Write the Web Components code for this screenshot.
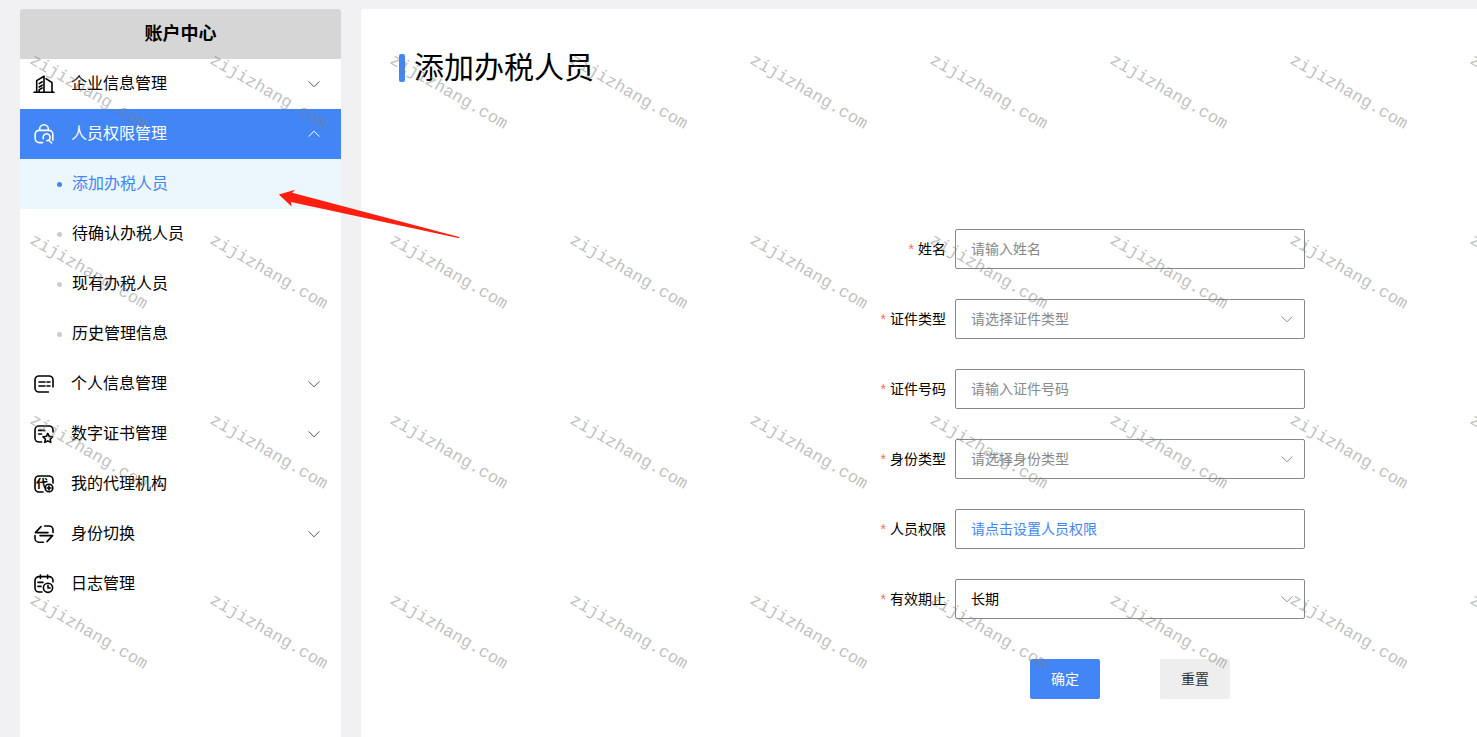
<!DOCTYPE html>
<html lang="zh-CN">
<head>
<meta charset="utf-8">
<meta name="viewport" content="width=device-width, initial-scale=1">
<title>账户中心</title>
<style>
    body {
        margin: 0;
        background: #f1f1f4;
        color: #000;
        font-family: "Liberation Sans", "Noto Sans CJK SC", sans-serif;
        font-size: 16px;
        line-height: 24px;
    }
</style>
</head>
<body>
<account-app>
    <side-menu slot="side" heading="账户中心">
        <menu-item icon="company" label="企业信息管理" arrow></menu-item>
        <menu-item icon="lock" label="人员权限管理" arrow open>
            <sub-item active>添加办税人员</sub-item>
            <sub-item>待确认办税人员</sub-item>
            <sub-item>现有办税人员</sub-item>
            <sub-item>历史管理信息</sub-item>
        </menu-item>
        <menu-item icon="profile" label="个人信息管理" arrow></menu-item>
        <menu-item icon="cert" label="数字证书管理" arrow></menu-item>
        <menu-item icon="agent" label="我的代理机构"></menu-item>
        <menu-item icon="swap" label="身份切换" arrow></menu-item>
        <menu-item icon="log" label="日志管理"></menu-item>
    </side-menu>
    <page-title>添加办税人员</page-title>
    <person-form>
        <form-field type="text" label="姓名" text="请输入姓名"></form-field>
        <form-field type="select" label="证件类型" text="请选择证件类型"></form-field>
        <form-field type="text" label="证件号码" text="请输入证件号码"></form-field>
        <form-field type="select" label="身份类型" text="请选择身份类型"></form-field>
        <form-field type="button" label="人员权限" text="请点击设置人员权限"></form-field>
        <form-field type="select" label="有效期止" text="长期" filled></form-field>
        <form-button slot="actions" primary>确定</form-button>
        <form-button slot="actions">重置</form-button>
    </person-form>
</account-app>
<water-mark text="zijizhang.com"></water-mark>
<pointer-arrow></pointer-arrow>

<script>
const icons = {
    company: `<path d="M0 18.2h20M2.7 18V6.6L10 2.2V18M12 4.6l6 4V18M5.2 9.6l3-1.8M5.2 13l3-1.8M5.2 18v-2.4l3-1.6"/>`,
    lock: `<path d="M5.6 6.4V5.2a4.4 4.4 0 0 1 8.8 0v1.2M8.6 18.6H5.2a4 4 0 0 1-4-4V10a3.6 3.6 0 0 1 3.6-3.6h10.4A3.6 3.6 0 0 1 18.8 10v6.2M9.4 14.6a3.5 3.5 0 1 1 3.4 2.2M14.6 16l3 3"/>`,
    profile: `<path d="M14.4 18H5a4 4 0 0 1-4-4V6a4 4 0 0 1 4-4h10a4 4 0 0 1 4 4v7M5 8h6M13 8h3M5 12h6M13 12h3"/>`,
    cert: `<path d="M7.6 18H5a4 4 0 0 1-4-4V6a4 4 0 0 1 4-4h10a4 4 0 0 1 4 4v2M4.6 6.4h6M4.6 10h3"/>
        <path d="M13.8 9.4l1.5 2.9 3.3.5-2.4 2.3.6 3.3-3-1.5-3 1.5.6-3.3-2.4-2.3 3.3-.5z"/>`,
    agent: `<path d="M9 18H5a4 4 0 0 1-4-4V6a4 4 0 0 1 4-4h10a4 4 0 0 1 4 4v3"/>
        <text x="2" y="14" font-size="12" font-weight="bold" fill="currentColor" stroke="none">代</text>
        <circle cx="15" cy="14" r="3.8" fill="#fff"/><path d="M13 14h4M15 12v4"/>`,
    swap: `<path d="M7 2.6L1.4 8.6H14M10.6 2H15a4 4 0 0 1 4 4v2.4M13 17.6l5.6-6H6M9.4 18.2H5a4 4 0 0 1-4-4v-2.6"/>`,
    log: `<path d="M8 18H5a4 4 0 0 1-4-4V6.6a4 4 0 0 1 4-4h10a4 4 0 0 1 4 4V8M6.4 1v3.4M13.6 1v3.4M4 8.4h5M4 12.4h3"/>
        <circle cx="14" cy="13.8" r="4.6"/><path d="M14 11.4v2.6h2"/>`
};

const chevron = `<svg class="chevron" viewBox="0 0 12 8" width="12" height="8" fill="none" stroke="currentColor"><path d="M.6 1.4L6 6.8l5.4-5.4"/></svg>`;

class AccountApp extends HTMLElement {
    constructor() {
        super();
        this.attachShadow({mode: "open"}).innerHTML = `
            <style>
                :host {
                    display: flex;
                    gap: 20px;
                    box-sizing: border-box;
                    min-height: 100vh;
                    padding: 9px 0 0 20px;
                }
                aside {
                    flex: 0 0 321px;
                    background: #fff;
                    border-radius: 3px 3px 0 0;
                    overflow: hidden;
                }
                main {
                    flex: 1;
                    min-width: 0;
                    padding: 39px 38px;
                    background: #fff;
                    border-radius: 3px 0 0 0;
                }
            </style>
            <aside><slot name="side"></slot></aside>
            <main><slot></slot></main>`;
    }
}
customElements.define("account-app", AccountApp);

class SideMenu extends HTMLElement {
    constructor() {
        super();
        this.attachShadow({mode: "open"}).innerHTML = `
            <style>
                :host { display: block; }
                h2 {
                    margin: 0;
                    background: #d6d6d6;
                    font-size: 18px;
                    line-height: 50px;
                    text-align: center;
                }
            </style>
            <h2>${this.getAttribute("heading")}</h2>
            <nav><slot></slot></nav>`;
    }
}
customElements.define("side-menu", SideMenu);

class MenuItem extends HTMLElement {
    constructor() {
        super();
        const open = this.hasAttribute("open");
        this.attachShadow({mode: "open"}).innerHTML = `
            <style>
                :host { display: block; }
                button {
                    display: flex;
                    align-items: center;
                    width: 100%;
                    height: 50px;
                    padding: 0 21px 0 14px;
                    border: 0;
                    background: none;
                    color: inherit;
                    font: inherit;
                    text-align: left;
                    cursor: pointer;
                }
                .icon {
                    margin-right: 17px;
                    overflow: visible;
                }
                .label { flex: 1; }
                .chevron { color: #555; }
                :host([open]) button {
                    background: #4285f4;
                    color: #fff;
                }
                :host([open]) .chevron {
                    color: #fff;
                    transform: rotate(180deg);
                }
            </style>
            <button type="button" aria-expanded="${open}">
                <svg class="icon" viewBox="0 0 20 20" width="20" height="20" fill="none" stroke="currentColor" stroke-width="1.6" stroke-linecap="round" stroke-linejoin="round">${icons[this.getAttribute("icon")]}</svg>
                <span class="label">${this.getAttribute("label")}</span>
                ${this.hasAttribute("arrow") ? chevron : ""}
            </button>
            <slot></slot>`;
    }
}
customElements.define("menu-item", MenuItem);

class SubItem extends HTMLElement {
    constructor() {
        super();
        this.attachShadow({mode: "open"}).innerHTML = `
            <style>
                :host { display: block; }
                a {
                    display: flex;
                    align-items: center;
                    gap: 10px;
                    height: 50px;
                    padding-left: 37px;
                    color: inherit;
                    text-decoration: none;
                }
                a::before {
                    content: "";
                    width: 5px;
                    height: 5px;
                    border-radius: 50%;
                    background: #ccc;
                }
                :host([active]) a {
                    background: #ebf6fd;
                    color: #4285f4;
                }
                :host([active]) a::before { background: #4285f4; }
            </style>
            <a href="#"><slot></slot></a>`;
    }
}
customElements.define("sub-item", SubItem);

class PageTitle extends HTMLElement {
    constructor() {
        super();
        this.attachShadow({mode: "open"}).innerHTML = `
            <style>
                :host { display: block; }
                h1 {
                    display: flex;
                    align-items: center;
                    gap: 9px;
                    margin: 0;
                    font-size: 30px;
                    font-weight: 400;
                    line-height: 40px;
                }
                h1::before {
                    content: "";
                    width: 6px;
                    height: 28px;
                    border-radius: 2px;
                    background: #4285f4;
                }
            </style>
            <h1><slot></slot></h1>`;
    }
}
customElements.define("page-title", PageTitle);

class PersonForm extends HTMLElement {
    constructor() {
        super();
        this.attachShadow({mode: "open"}).innerHTML = `
            <style>
                :host {
                    display: flex;
                    justify-content: flex-end;
                    margin-top: 141px;
                    padding-right: 134px;
                    font-size: 14px;
                }
                form {
                    display: flex;
                    flex-direction: column;
                    gap: 30px;
                }
                .actions {
                    display: flex;
                    justify-content: center;
                    gap: 60px;
                    width: 350px;
                    margin-top: 10px;
                    align-self: flex-end;
                }
            </style>
            <form>
                <slot></slot>
                <div class="actions"><slot name="actions"></slot></div>
            </form>`;
    }
}
customElements.define("person-form", PersonForm);

class FormField extends HTMLElement {
    constructor() {
        super();
        this.attachShadow({mode: "open"});
        this.render();
    }

    control() {
        const text = this.getAttribute("text");
        switch (this.getAttribute("type")) {
            case "select":
                return `<select id="control"><option>${text}</option></select>${chevron}`;
            case "button":
                return `<button id="control" type="button">${text}</button>`;
            default:
                return `<input id="control" type="text" placeholder="${text}">`;
        }
    }

    render() {
        this.shadowRoot.innerHTML = `
            <style>
                :host {
                    display: flex;
                    align-items: center;
                    justify-content: flex-end;
                    gap: 9px;
                }
                label::before {
                    content: "*";
                    margin-right: 4px;
                    color: #f56c6c;
                }
                .box {
                    display: grid;
                    align-items: center;
                    width: 350px;
                }
                .box > * { grid-area: 1 / 1; }
                input, select, button {
                    box-sizing: border-box;
                    width: 100%;
                    height: 40px;
                    padding: 0 15px;
                    border: 1px solid #888;
                    border-radius: 2px;
                    background: #fff;
                    color: #888;
                    font: inherit;
                    text-align: left;
                    appearance: none;
                }
                input::placeholder { color: #888; }
                button {
                    color: #4285f4;
                    cursor: pointer;
                }
                :host([filled]) select { color: #000; }
                .chevron {
                    justify-self: end;
                    margin-right: 12px;
                    color: #888;
                    pointer-events: none;
                }
            </style>
            <label for="control">${this.getAttribute("label")}</label>
            <div class="box">${this.control()}</div>`;
    }
}
customElements.define("form-field", FormField);

class FormButton extends HTMLElement {
    constructor() {
        super();
        this.attachShadow({mode: "open"}).innerHTML = `
            <style>
                :host { display: block; }
                button {
                    width: 70px;
                    height: 40px;
                    padding: 0;
                    border: 0;
                    border-radius: 2px;
                    background: #eee;
                    color: #333;
                    font: inherit;
                    cursor: pointer;
                }
                :host([primary]) button {
                    background: #4285f4;
                    color: #fff;
                }
            </style>
            <button type="button"><slot></slot></button>`;
    }
}
customElements.define("form-button", FormButton);

// repeats its text over the whole window in 180px tiles
class WaterMark extends HTMLElement {
    constructor() {
        super();
        const cols = Math.ceil(window.innerWidth / 180);
        const rows = Math.ceil((window.innerHeight - 48) / 180);
        const tile = `<span>${this.getAttribute("text")}</span>`;
        this.attachShadow({mode: "open"}).innerHTML = `
            <style>
                :host {
                    position: absolute;
                    inset: 0;
                    display: grid;
                    grid-template-columns: repeat(${cols}, 180px);
                    grid-auto-rows: 180px;
                    box-sizing: border-box;
                    padding: 48px 0 0 26px;
                    overflow: hidden;
                    pointer-events: none;
                    color: rgba(128, 128, 128, 0.5);
                    font-family: "Liberation Mono", monospace;
                    font-size: 17px;
                    line-height: 20px;
                }
                span {
                    justify-self: start;
                    align-self: start;
                    transform: rotate(30deg);
                    transform-origin: 0 100%;
                }
            </style>
            ${tile.repeat(cols * rows)}`;
    }
}
customElements.define("water-mark", WaterMark);

class PointerArrow extends HTMLElement {
    constructor() {
        super();
        this.attachShadow({mode: "open"}).innerHTML = `
            <style>
                :host {
                    position: absolute;
                    left: 278px;
                    top: 188px;
                    pointer-events: none;
                }
                svg { display: block; }
            </style>
            <svg width="182" height="52" viewBox="0 0 182 52" fill="#ff1f10"><path d="M.8 6.5L17.2 1.8l-3 3L181.2 49v1.2L13 14l.6 4.6z"/></svg>`;
    }
}
customElements.define("pointer-arrow", PointerArrow);
</script>
</body>
</html>
